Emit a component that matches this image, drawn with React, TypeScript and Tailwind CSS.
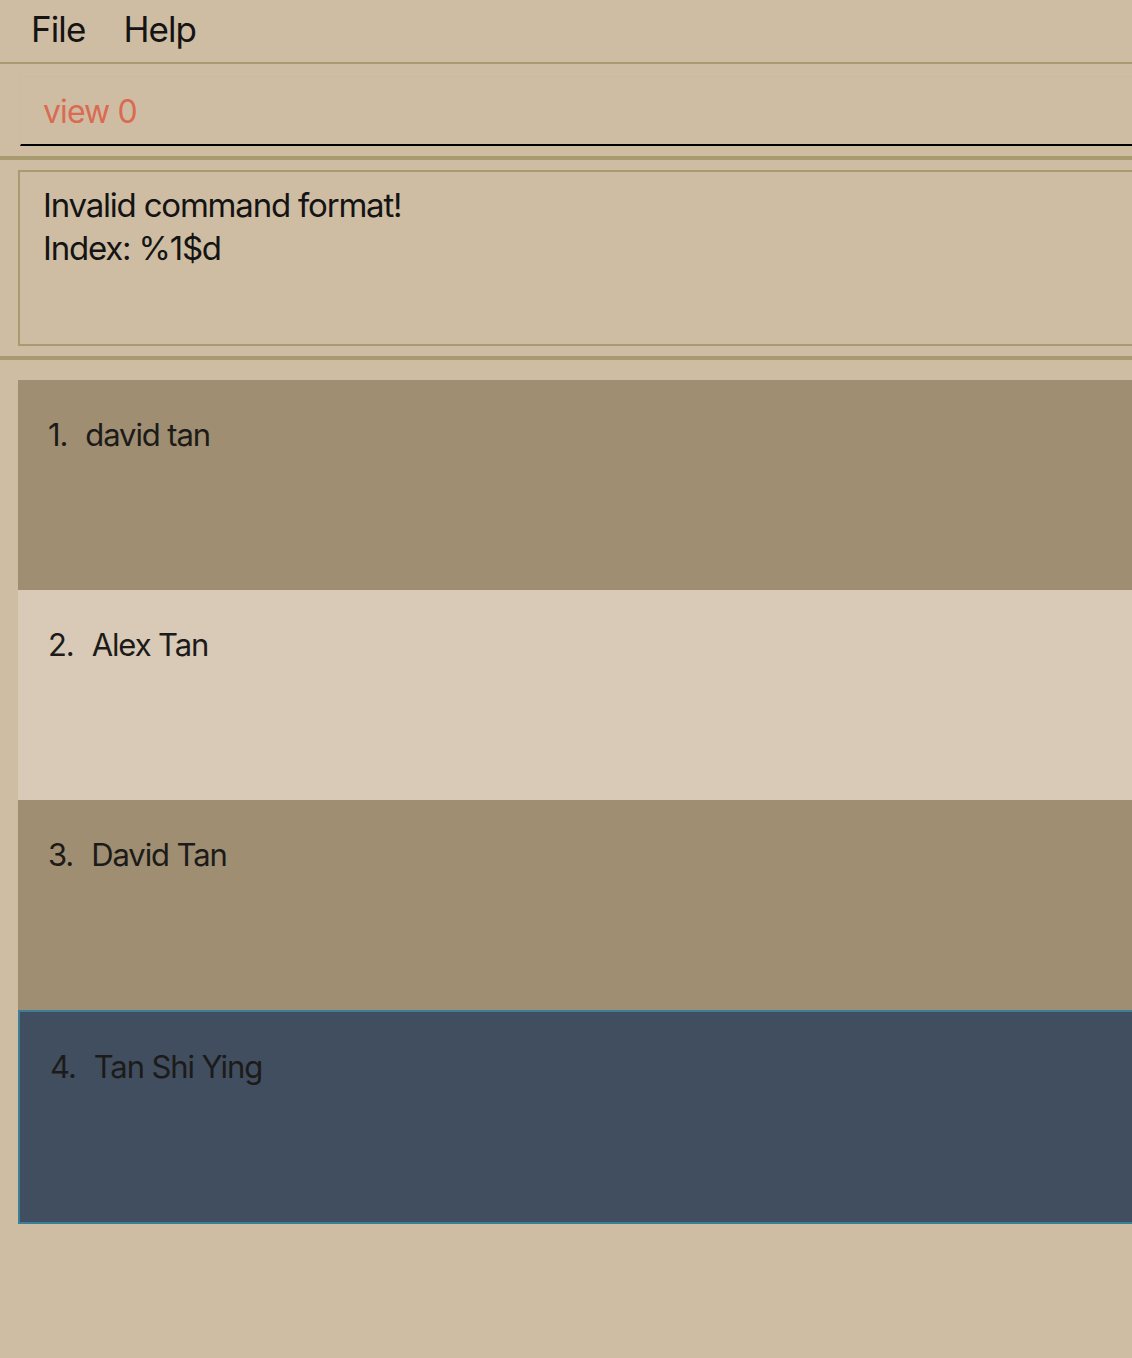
const people = [
  { id: 1, name: "david tan", bg: "bg-[#9f8e71]" },
  { id: 2, name: "Alex Tan", bg: "bg-[#d8cab6]" },
  { id: 3, name: "David Tan", bg: "bg-[#9f8e71]" },
]

const PersonCard = ({ id, name, bg }: { id: number; name: string; bg: string }) => {
  return (
    <div className={`h-[210px] ${bg} pl-[30px] pt-[33px]`}>
      <div className="flex flex-row items-baseline gap-[18px] text-[31px] leading-[44px] text-[#1c1b19] tracking-[-1.1px]">
        <span>{id}.</span>
        <span>{name}</span>
      </div>
    </div>
  )
}

const App = () => {
  return (
    <main
      className="w-[1132px] h-[1358px] overflow-hidden bg-[#cfbda3] text-[#141414]"
      style={{ fontFamily: "Inter, 'Noto Sans', sans-serif" }}
    >
      <div className="w-[1180px]">
        <nav className="h-[64px] border-b-2 border-[#a99b70] flex flex-row items-center gap-[38px] pl-[31px] pb-[4px] text-[35px] tracking-[-0.9px]">
          <span>File</span>
          <span>Help</span>
        </nav>
        <div className="pl-[20px] pt-[12px]">
          <div className="h-[70px] border-t border-l border-[#ccba9f] border-b-2 border-b-black flex items-center pl-[22px] pt-[2px] text-[32px] text-[#db6a52] tracking-[-0.9px]">
            view 0
          </div>
        </div>
        <div className="mt-[10px] h-[4px] bg-[#a99b70]" />
        <div className="pl-[18px] pt-[10px]">
          <div className="h-[176px] border-2 border-[#a99b70] pl-[23px] pt-[12px] text-[33px] leading-[43px] tracking-[-1.2px]">
            <p>Invalid command format!</p>
            <p>Index: %1$d</p>
          </div>
        </div>
        <div className="mt-[10px] h-[4px] bg-[#a99b70]" />
        <div className="pl-[18px] pt-[20px] flex flex-col">
          {people.map((p) => (
            <PersonCard key={p.id} {...p} />
          ))}
          <div className="h-[214px] bg-[#414e5f] border-2 border-[#3a7e98] pl-[30px] pt-[33px]">
            <div className="flex flex-row items-baseline gap-[18px] text-[31px] leading-[44px] text-[#1c1b19] tracking-[-1.1px]">
              <span>4.</span>
              <span>Tan Shi Ying</span>
            </div>
          </div>
        </div>
      </div>
    </main>
  )
}

export default App
